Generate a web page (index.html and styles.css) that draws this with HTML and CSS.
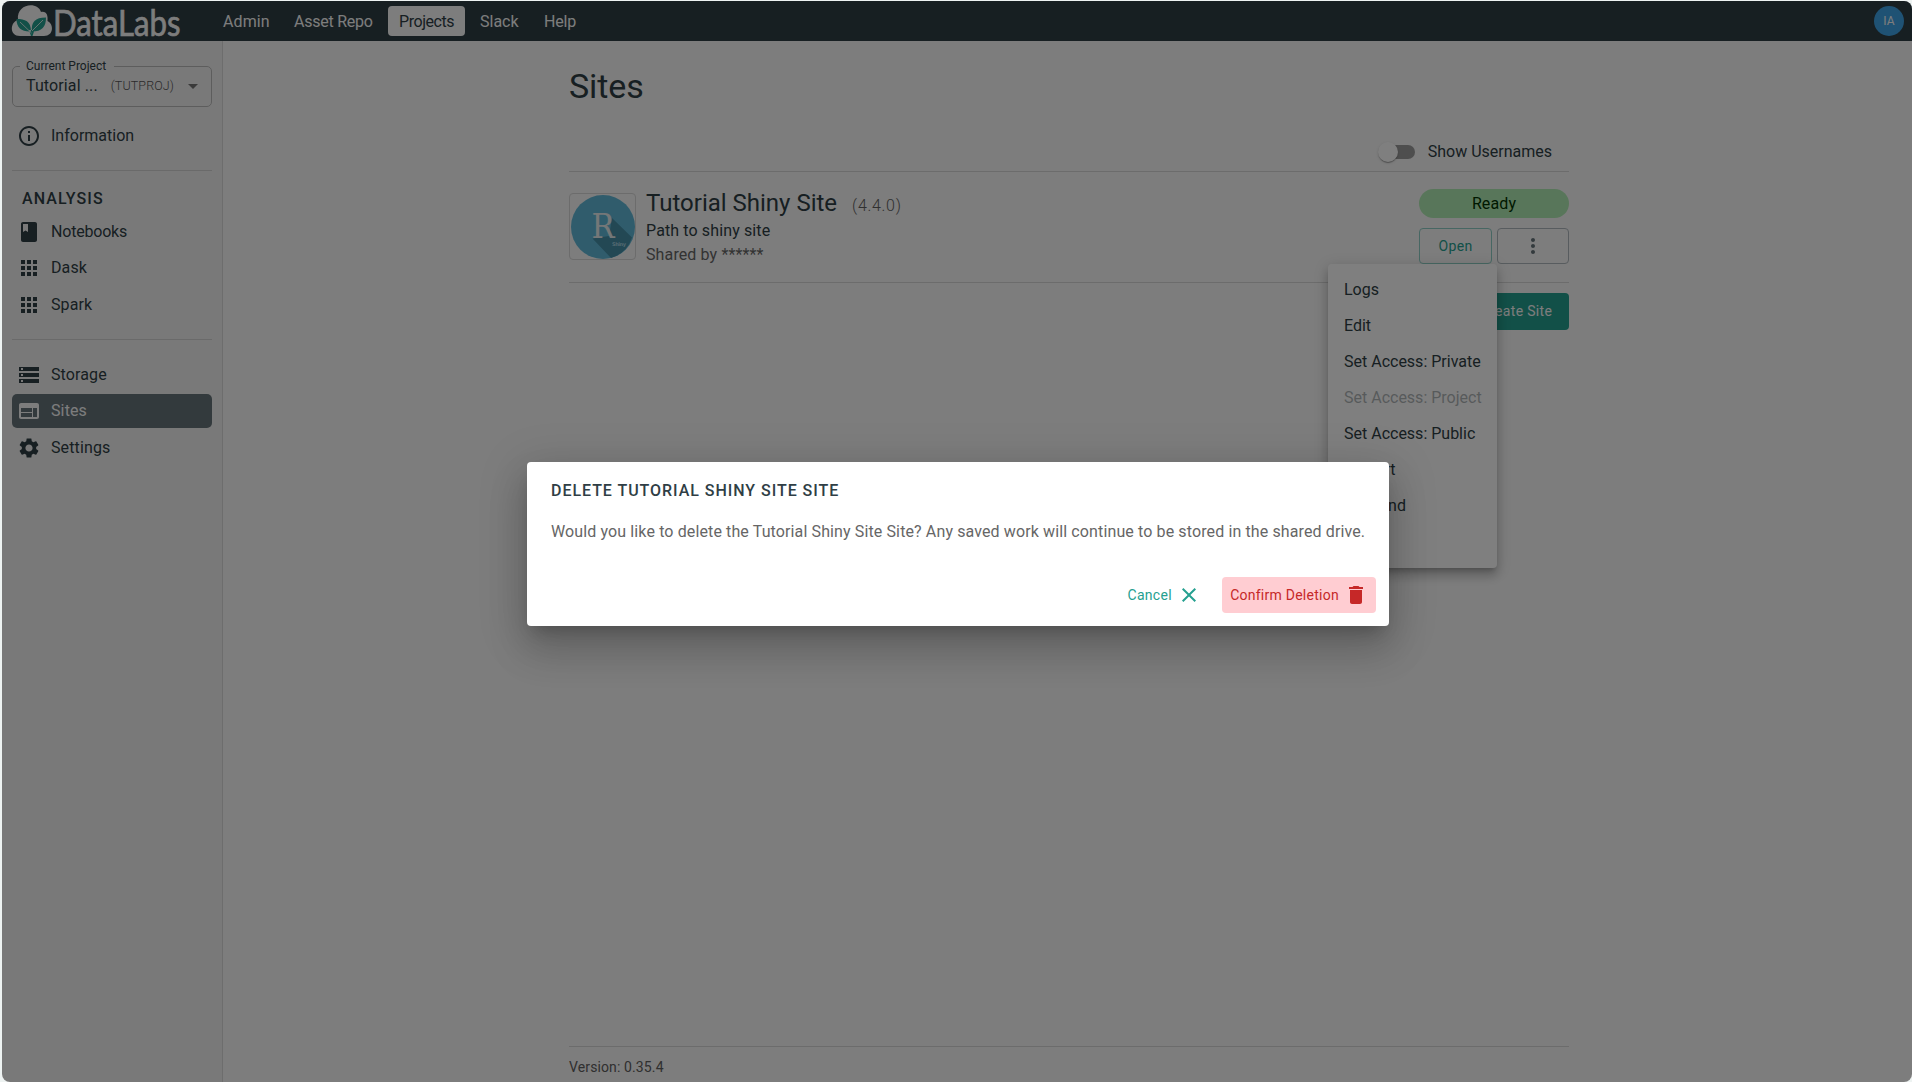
FILE: index.html
```html
<!DOCTYPE html>
<html lang="en">
<head>
<meta charset="utf-8">
<title>DataLabs</title>
<link rel="stylesheet" href="styles.css">
</head>
<body>
<div class="app">
  <header class="topbar">
    <svg class="logo" width="182" height="40" viewBox="0 0 182 40">
      <path class="logo-cloud" d="M18 35C7 35 8 21 16 19C14 2 36 0 39 11C45 10 46 15 45.500 20C52 23 52 35 42 35z"/>
      <path class="logo-leaf" d="M14.500 18C23 18 29 20 29 30.500C20 31 14.500 27 14.500 18zM44 16.500C33 16.500 29 21 30 30.500C40 30.500 44 26 44 16.500zM27 29l2 6h1.500l2-6z"/>
      <path class="logo-vein" d="M18 21L29.500 32M41 19L30 30"/>
      <text class="logo-text" x="51" y="35" textLength="127.500" lengthAdjust="spacingAndGlyphs">DataLabs</text>
    </svg>
    <nav class="nav">
      <a class="nav-link">Admin</a>
      <a class="nav-link nav-repo">Asset Repo</a>
      <a class="nav-link nav-active">Projects</a>
      <a class="nav-link nav-slack">Slack</a>
      <a class="nav-link nav-help">Help</a>
    </nav>
    <div class="avatar">IA</div>
  </header>
  <div class="body">
    <aside class="sidebar">
      <fieldset class="project">
        <legend>Current Project</legend>
        <div class="project-row">
          <span class="project-name">Tutorial ...</span>
          <span class="project-key">(TUTPROJ)</span>
          <svg width="24" height="24" viewBox="0 0 24 24"><path d="M7 10l5 5 5-5z"/></svg>
        </div>
      </fieldset>
      <a class="item"><svg width="24" height="24" viewBox="0 0 24 24"><path d="M11 7h2v2h-2zm0 4h2v6h-2zm1-9C6.480 2 2 6.480 2 12s4.480 10 10 10 10-4.480 10-10S17.520 2 12 2zm0 18c-4.410 0-8-3.590-8-8s3.590-8 8-8 8 3.590 8 8-3.590 8-8 8z"/></svg>Information</a>
      <hr class="side-rule rule-a">
      <h2 class="side-title">ANALYSIS</h2>
      <div class="items">
        <a class="item item-notebooks"><svg width="24" height="24" viewBox="0 0 24 24"><path d="M18 2H6c-1.100 0-2 .9-2 2v16c0 1.100.9 2 2 2h12c1.100 0 2-.9 2-2V4c0-1.100-.9-2-2-2zM6 4h5v8l-2.500-1.500L6 12V4z"/></svg>Notebooks</a>
        <a class="item"><svg width="24" height="24" viewBox="0 0 24 24"><path d="M4 8h4V4H4zm6 12h4v-4h-4zm-6 0h4v-4H4zm0-6h4v-4H4zm6 0h4v-4h-4zm6-10v4h4V4zm-6 4h4V4h-4zm6 6h4v-4h-4zm0 6h4v-4h-4z"/></svg>Dask</a>
        <a class="item"><svg width="24" height="24" viewBox="0 0 24 24"><path d="M4 8h4V4H4zm6 12h4v-4h-4zm-6 0h4v-4H4zm0-6h4v-4H4zm6 0h4v-4h-4zm6-10v4h4V4zm-6 4h4V4h-4zm6 6h4v-4h-4zm0 6h4v-4h-4z"/></svg>Spark</a>
      </div>
      <hr class="side-rule rule-b">
      <div class="items">
        <a class="item"><svg width="24" height="24" viewBox="0 0 24 24"><path d="M2 20h20v-4H2zm2-3h2v2H4zM2 4v4h20V4zm4 3H4V5h2zm-4 7h20v-4H2zm2-3h2v2H4z"/></svg>Storage</a>
        <a class="item item-active"><svg width="24" height="24" viewBox="0 0 24 24"><path d="M20 4H4c-1.100 0-1.990.9-1.990 2L2 18c0 1.100.9 2 2 2h16c1.100 0 2-.9 2-2V6c0-1.100-.9-2-2-2zm-5 14H4v-4h11zm0-5H4V9h11zm5 5h-4V9h4z"/></svg>Sites</a>
        <a class="item"><svg width="24" height="24" viewBox="0 0 24 24"><path d="M19.140 12.940c.04-.3.060-.61.060-.94 0-.32-.02-.64-.07-.94l2.030-1.580c.18-.14.230-.41.120-.61l-1.920-3.320c-.12-.22-.37-.29-.59-.22l-2.390.96c-.5-.38-1.030-.7-1.620-.94l-.36-2.540c-.04-.24-.24-.41-.48-.41h-3.840c-.24 0-.43.170-.47.410l-.36 2.540c-.59.240-1.130.570-1.620.940l-2.390-.96c-.22-.08-.47 0-.59.220L2.740 8.870c-.12.210-.08.470.120.610l2.030 1.580c-.05.3-.09.630-.09.940s.02.640.070.940l-2.030 1.580c-.18.140-.23.410-.12.610l1.920 3.320c.12.220.370.290.590.220l2.390-.96c.5.380 1.030.7 1.620.940l.36 2.540c.05.240.240.410.480.410h3.840c.24 0 .44-.17.470-.41l.36-2.540c.59-.24 1.130-.56 1.620-.94l2.390.96c.22.080.470 0 .59-.22l1.920-3.320c.12-.22.070-.47-.12-.61l-2.010-1.580zM12 15.600c-1.980 0-3.600-1.620-3.600-3.600s1.620-3.600 3.600-3.600 3.600 1.620 3.600 3.600-1.620 3.600-3.600 3.600z"/></svg>Settings</a>
      </div>
    </aside>
    <main class="main">
      <div class="column">
        <h1 class="page-title">Sites</h1>
        <div class="toggle-row"><span class="switch"></span><span>Show Usernames</span></div>
        <section class="site">
          <div class="site-icon">
            <svg width="64" height="64" viewBox="0 0 64 64">
              <circle class="shiny-disc" cx="32" cy="32" r="32"/>
              <path class="shiny-shade" d="M41 23L61 42.500A32 32 0 0 1 40 63L21.500 43.500 38 41z"/>
              <text class="shiny-r" x="20.500" y="43" textLength="23" lengthAdjust="spacingAndGlyphs">R</text>
              <text class="shiny-word" x="41" y="51" textLength="14">Shiny</text>
            </svg>
          </div>
          <div class="site-info">
            <div class="site-head"><span class="site-name">Tutorial Shiny Site</span><span class="site-version">(4.4.0)</span></div>
            <div class="site-desc">Path to shiny site</div>
            <div class="site-shared">Shared by ******</div>
          </div>
          <div class="site-actions">
            <div class="status">Ready</div>
            <div class="buttons">
              <button class="btn btn-open">Open</button>
              <button class="btn btn-more" aria-label="More"><svg width="24" height="24" viewBox="0 0 24 24"><path d="M12 8c1.100 0 2-.9 2-2s-.9-2-2-2-2 .9-2 2 .9 2 2 2zm0 2c-1.100 0-2 .9-2 2s.9 2 2 2 2-.9 2-2-.9-2-2-2zm0 6c-1.100 0-2 .9-2 2s.9 2 2 2 2-.9 2-2-.9-2-2-2z"/></svg></button>
            </div>
          </div>
        </section>
        <div class="create-row"><button class="btn btn-create">Create Site</button></div>
        <footer class="footer">Version: 0.35.4</footer>
      </div>
    </main>
  </div>
  <ul class="menu">
    <li>Logs</li>
    <li>Edit</li>
    <li>Set Access: Private</li>
    <li class="disabled">Set Access: Project</li>
    <li>Set Access: Public</li>
    <li>Restart</li>
    <li>Suspend</li>
    <li>Delete</li>
  </ul>
  <div class="backdrop"></div>
  <div class="dialog" role="dialog">
    <h2 class="dialog-title">DELETE TUTORIAL SHINY SITE SITE</h2>
    <p class="dialog-text">Would you like to delete the Tutorial Shiny Site Site? Any saved work will continue to be stored in the shared drive.</p>
    <div class="dialog-actions">
      <button class="btn btn-cancel">Cancel<svg width="24" height="24" viewBox="0 0 24 24"><path d="M19 6.410L17.590 5 12 10.590 6.410 5 5 6.410 10.590 12 5 17.590 6.410 19 12 13.410 17.590 19 19 17.590 13.410 12z"/></svg></button>
      <button class="btn btn-confirm">Confirm Deletion<svg width="24" height="24" viewBox="0 0 24 24"><path d="M6 19c0 1.100.9 2 2 2h8c1.100 0 2-.9 2-2V7H6zM19 4h-3.500l-1-1h-5l-1 1H5v2h14z"/></svg></button>
    </div>
  </div>
</div>
</body>
</html>
```
FILE: styles.css
```css
* { box-sizing: border-box; }
body {
  margin: 0;
  padding: 1px 0 0 2px;
  height: 1082px;
  overflow: hidden;
  background: #eef3f2;
  color: #2f3e45;
  font: 16px/24px Roboto, sans-serif;
  letter-spacing: 0.12px;
}
h1, h2, p, ul { margin: 0; padding: 0; }
svg { display: block; flex: none; fill: currentColor; }
.app {
  position: relative;
  display: flex;
  flex-direction: column;
  height: 1081px;
  border-radius: 8px;
  overflow: hidden;
  background: #fafafa;
}
.topbar {
  display: flex;
  align-items: center;
  height: 40px;
  flex: none;
  padding: 0 8px 0 0;
  background: #2f3e45;
  color: #fafafa;
}
.logo { margin-right: 28px; overflow: visible; }
.logo-cloud { fill: #fafafa; }
.logo-leaf { fill: #25a090; }
.logo-vein { fill: none; stroke: #fafafa; stroke-width: 0.8; }
.logo-text {
  font: 400 37px Lato, sans-serif;
  letter-spacing: 0;
  stroke: #fafafa;
  stroke-width: 0.7;
}
.nav { display: flex; gap: 4px; flex: 1; }
.nav-link { height: 30px; padding: 4px 0 2px 11px; border-radius: 4px; width: 67px; white-space: nowrap; }
.nav-repo { width: 101px; letter-spacing: -0.25px; }
.nav-active { width: 77px; background: #fafafa; color: #2f3e45; letter-spacing: -0.45px; }
.nav-slack { width: 60px; letter-spacing: 0; }
.nav-help { width: 54px; letter-spacing: -0.2px; }
.avatar {
  width: 30px;
  height: 30px;
  border-radius: 50%;
  background: #3fa5e8;
  font-size: 12px;
  line-height: 30px;
  text-align: center;
}
.body { display: flex; flex: 1; min-height: 0; }
.sidebar {
  width: 221px;
  padding: 18px 10px 0;
  background: #f3f3f3;
  border-right: 1px solid #dadada;
}
.project {
  margin: 0;
  height: 48px;
  padding: 0 9px 0 13px;
  border: 1px solid #bbb;
  border-radius: 5px;
}
.project legend {
  margin-left: -6px;
  padding: 0 8px 0 6px;
  font-size: 12px;
  line-height: 14px;
  letter-spacing: 0;
}
.project-row { display: flex; align-items: center; height: 26px; }
.project-name { flex: 1; }
.project-key { margin-right: 7px; font-size: 12.500px; font-weight: 300; color: #555; }
.project svg { color: #757575; margin-right: -3px; }
.item {
  display: flex;
  align-items: center;
  gap: 10px;
  height: 34px;
  padding-left: 5px;
  border-radius: 5px;
}
.project + .item { margin-top: 12px; letter-spacing: 0; }
.item-notebooks { letter-spacing: -0.2px; }
.items { display: flex; flex-direction: column; gap: 2.400px; }
.item-active { background: #67757b; color: #fafafa; }
.side-rule { height: 1px; margin: 0; border: 0; background: #d4d4d4; }
.rule-a { margin-top: 17px; }
.side-title {
  padding: 16px 10px 0;
  font-size: 16px;
  font-weight: 500;
  line-height: 24px;
  letter-spacing: 1.100px;
  margin-bottom: 4px;
}
.rule-b { margin: 17.200px 0 18px; }
.main { flex: 1; padding-left: 346px; }
.column { display: flex; flex-direction: column; width: 1000px; height: 100%; }
.page-title {
  margin-top: 24px;
  font-size: 34px;
  font-weight: 400;
  line-height: 42px;
  letter-spacing: -0.1px;
}
.toggle-row {
  display: flex;
  justify-content: flex-end;
  align-items: center;
  gap: 13px;
  height: 38px;
  margin-top: 26px;
  padding-right: 17px;
  letter-spacing: 0;
}
.switch {
  position: relative;
  width: 34px;
  height: 14px;
  border-radius: 7px;
  background: #9c9c9c;
}
.switch::before {
  content: "";
  position: absolute;
  left: -3px;
  top: -3px;
  width: 20px;
  height: 20px;
  border-radius: 50%;
  background: #fff;
  box-shadow: 0 2px 1px -1px rgba(0,0,0,.2), 0 1px 1px rgba(0,0,0,.14), 0 1px 3px rgba(0,0,0,.12);
}
.site {
  display: flex;
  height: 112px;
  border: solid #d8d8d8;
  border-width: 1px 0;
}
.site-icon {
  width: 67px;
  height: 67px;
  margin-top: 21px;
  padding: 1px 0 0 1px;
  border: 1px solid #d8d8d8;
  border-radius: 4px;
}
.shiny-disc { fill: #60b9d8; }
.shiny-shade { fill: #4690a9; }
.shiny-r { font: 33px "DejaVu Serif", serif; fill: #e8eef0; letter-spacing: 0; }
.shiny-word { font: bold 5px "DejaVu Sans", sans-serif; fill: #a8d3e0; letter-spacing: 0; }
.site-info { flex: 1; padding: 15px 0 0 10px; }
.site-head { display: flex; align-items: baseline; gap: 15px; height: 32px; line-height: 32px; }
.site-name { font-size: 24px; letter-spacing: 0; }
.site-version { font-weight: 300; color: #606060; letter-spacing: 0.700px; }
.site-shared { color: #666; }
.site-actions { width: 150px; padding-top: 17px; }
.status {
  height: 29px;
  border-radius: 15px;
  background: #b1ecb4;
  color: #003300;
  line-height: 29px;
  text-align: center;
}
.buttons { display: flex; gap: 5px; margin-top: 10px; }
.btn {
  display: flex;
  align-items: center;
  justify-content: center;
  height: 36px;
  border: 0;
  border-radius: 4px;
  background: none;
  font: 14px Roboto, sans-serif;
  letter-spacing: 0.320px;
}
.btn-open { width: 73px; border: 1px solid #8ecfc6; color: #25a090; }
.btn-more { width: 72px; border: 1px solid #b0b9be; color: #67757b; }
.create-row { display: flex; justify-content: flex-end; padding-top: 10px; }
.btn-create { width: 105px; height: 37px; padding-bottom: 2px; background: #25a090; color: #fafafa; }
.footer {
  height: 36px;
  margin-top: auto;
  padding-top: 8px;
  border-top: 1px solid #d8d8d8;
  color: #606060;
  font-size: 14px;
}
.menu {
  position: absolute;
  left: 1326px;
  top: 263px;
  width: 169px;
  padding: 8px 0;
  border-radius: 4px;
  background: #fff;
  list-style: none;
  letter-spacing: 0;
  box-shadow: 0 5px 5px -3px rgba(0,0,0,.2), 0 8px 10px 1px rgba(0,0,0,.14), 0 3px 14px 2px rgba(0,0,0,.12);
}
.menu li { height: 36px; padding: 6px 16px; white-space: nowrap; }
.menu .disabled { opacity: 0.380; }
.backdrop { position: absolute; inset: 0; background: rgba(0,0,0,.5); }
.dialog {
  position: absolute;
  left: 525px;
  top: 461px;
  width: 862px;
  height: 164px;
  padding: 17px 13px 13px 24px;
  border-radius: 4px;
  background: #fff;
  box-shadow: 0 11px 15px -7px rgba(0,0,0,.2), 0 24px 38px 3px rgba(0,0,0,.14), 0 9px 46px 8px rgba(0,0,0,.12);
}
.dialog-title { font-size: 16px; font-weight: 500; line-height: 24px; letter-spacing: 0.960px; }
.dialog-text { margin-top: 17px; color: #666; white-space: nowrap; }
.dialog-actions { display: flex; justify-content: flex-end; gap: 13px; margin-top: 33px; }
.dialog .btn { gap: 5px; padding: 0 8px; }
.btn-cancel { color: #25a090; }
.dialog .btn-confirm { width: 154px; background: #ffcdd2; color: #c62828; letter-spacing: 0.250px; }
```
